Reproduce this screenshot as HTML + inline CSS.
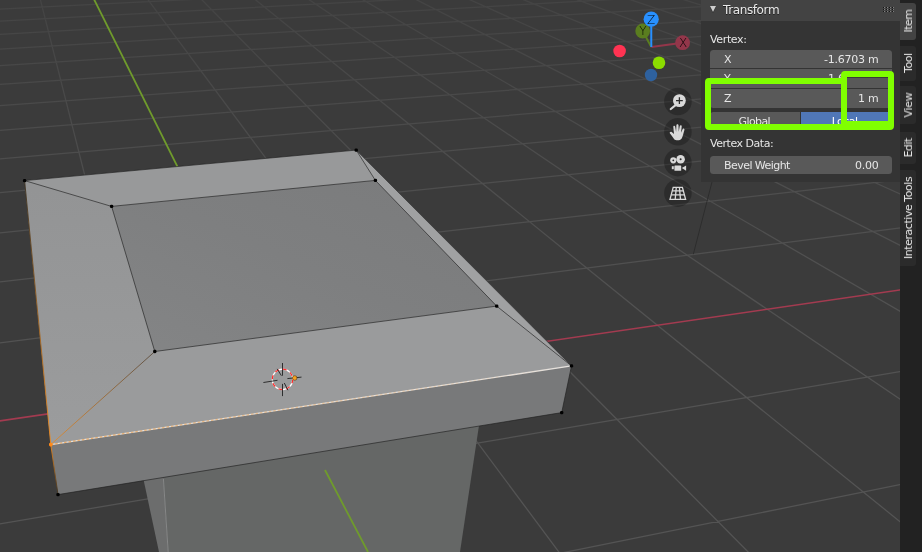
<!DOCTYPE html>
<html><head><meta charset="utf-8"><title>Blender viewport</title>
<style>
html,body{margin:0;padding:0;background:#3b3b3b;}
body{width:922px;height:552px;position:relative;overflow:hidden;font-family:"DejaVu Sans","Liberation Sans",sans-serif;font-size:11px;color:#e6e6e6;}
.vp{position:absolute;left:0;top:0;display:block}
.abs{position:absolute}
.hdr .t,.lbl,.fld span,.tab span,.gl{will-change:transform}
.panel{position:absolute;left:701px;top:0;width:199px;height:182px;background:#343434}
.hdr{position:absolute;left:0;top:0;width:199px;height:21px;background:#434343}
.hdr .t{position:absolute;left:22.1px;top:2.9px;font-size:12px;line-height:15px;color:#e8e8e8;letter-spacing:-0.39px;text-shadow:0 1px 0 rgba(0,0,0,.55)}
.tri{position:absolute;left:8.8px;top:6.1px;width:0;height:0;border-left:3.5px solid transparent;border-right:3.5px solid transparent;border-top:6.2px solid #cdcdcd;filter:drop-shadow(0 1px 0 rgba(0,0,0,.4))}
.lbl{position:absolute;left:9.4px;line-height:14px;white-space:nowrap}
.fld{position:absolute;left:8.8px;width:182.600px;background:#595959;height:18.5px}
.fld span{position:absolute;top:3px;line-height:14px;white-space:nowrap}
.fld .n{left:14.000px} .fld .v{right:14.100px}
.strip{position:absolute;left:900px;top:0;width:22px;height:552px;background:#222222}
.tab{position:absolute;left:0;width:16px;background:#2b2b2b;border-radius:0 3px 3px 0}
.tab.act{background:#434343}
.tab span{position:absolute;left:calc(50% + 1px);top:50%;white-space:nowrap;transform:translate(-50%,-50%) rotate(-90deg);line-height:14px}
.gb{position:absolute;box-sizing:border-box;border:6px solid #80ff00;border-radius:4px}
</style></head><body>
<svg class="vp" width="922" height="552" viewBox="0 0 922 552">
<defs>
<linearGradient id="gInner" x1="0" y1="1" x2="1" y2="0"><stop offset="0" stop-color="#848586"/><stop offset="0.5" stop-color="#7e7f80"/><stop offset="1" stop-color="#7a7b7c"/></linearGradient>
<linearGradient id="gFront" gradientUnits="userSpaceOnUse" x1="50" y1="440" x2="570" y2="370"><stop offset="0" stop-color="#f08a1c"/><stop offset="0.5" stop-color="#f3c9a0"/><stop offset="1" stop-color="#f4f4f4"/></linearGradient>
<linearGradient id="gDiag" gradientUnits="userSpaceOnUse" x1="50.8" y1="444.6" x2="154.8" y2="351.5"><stop offset="0" stop-color="#f08a1c"/><stop offset="1" stop-color="#4a3a2a"/></linearGradient>
<linearGradient id="gLeft" gradientUnits="userSpaceOnUse" x1="50.8" y1="444.6" x2="24.6" y2="180.6"><stop offset="0" stop-color="#f08a1c"/><stop offset="1" stop-color="#3a3020"/></linearGradient>
<linearGradient id="gDown" gradientUnits="userSpaceOnUse" x1="50.8" y1="444.6" x2="58" y2="494.6"><stop offset="0" stop-color="#f08a1c"/><stop offset="1" stop-color="#3a3020"/></linearGradient>
<linearGradient id="gGrid" gradientUnits="userSpaceOnUse" x1="0" y1="0" x2="0" y2="552"><stop offset="0" stop-color="#444444"/><stop offset="0.3" stop-color="#4d4d4d"/><stop offset="0.6" stop-color="#525252"/><stop offset="1" stop-color="#545454"/></linearGradient>
<linearGradient id="gFade" gradientUnits="userSpaceOnUse" x1="50" y1="440" x2="570" y2="370"><stop offset="0" stop-color="#f08a1c" stop-opacity="1"/><stop offset="0.55" stop-color="#f08a1c" stop-opacity="0.5"/><stop offset="1" stop-color="#f08a1c" stop-opacity="0"/></linearGradient>
<linearGradient id="gLS" gradientUnits="userSpaceOnUse" x1="0" y1="190" x2="0" y2="440"><stop offset="0" stop-color="#939495"/><stop offset="1" stop-color="#9b9c9d"/></linearGradient>
</defs>
<rect width="922" height="552" fill="#3b3b3b"/>
<path d="M181.2 557.0L39.2 -5.0M562.6 557.0L144.5 -5.0M753.1 557.0L197.1 -5.0M927.0 543.6L249.6 -5.0M927.0 417.3L302.2 -5.0M927.0 326.9L354.6 -5.0M927.0 259.0L407.1 -5.0M927.0 206.1L459.5 -5.0M927.0 163.8L511.9 -5.0M927.0 129.2L564.3 -5.0M927.0 100.3L616.6 -5.0M927.0 75.9L668.9 -5.0M927.0 54.9L721.2 -5.0M927.0 36.7L773.5 -5.0M927.0 20.8L825.7 -5.0M927.0 6.8L877.8 -5.0M541.6 557.0L927.0 479.2M-5.0 524.7L927.0 367.0M-5.0 343.6L927.0 224.6M-5.0 282.5L927.0 176.6M-5.0 233.4L927.0 137.9M-5.0 193.0L927.0 106.2M-5.0 159.3L927.0 79.6M-5.0 130.7L927.0 57.1M-5.0 106.0L927.0 37.7M-5.0 84.7L927.0 20.9M-5.0 65.9L927.0 6.2M-5.0 49.4L896.5 -5.0M-5.0 34.6L690.9 -5.0M-5.0 21.4L484.8 -5.0M-5.0 9.5L278.3 -5.0M-5.0 -1.3L71.2 -5.0" stroke="url(#gGrid)" stroke-width="1.25" fill="none"/>
<path d="M-5.0 421.6L927.0 286.0" stroke="#a33b50" stroke-width="1.6" fill="none"/>
<path d="M372.0 557.0L91.9 -5.0" stroke="#6f9b2c" stroke-width="1.8" fill="none"/>
<line x1="712.5" y1="180.0" x2="693.3" y2="254.3" stroke="#262626" stroke-width="0.7" />
<polygon points="142.6,475.2 163.0,472.6 168.2,552.0 159.0,552.0" fill="#6c6d6d"/>
<polygon points="163.0,472.6 479.7,420.7 460.0,552.0 168.2,552.0" fill="#656766"/>
<line x1="163.4" y1="478.6" x2="168.2" y2="552.0" stroke="#868787" stroke-width="1.0" />
<line x1="325.0" y1="470.0" x2="368.0" y2="552.0" stroke="#6f9b2c" stroke-width="1.8" />
<polygon points="50.8,444.6 571.5,365.9 561.7,412.6 58.0,494.6" fill="#78797a"/>
<polygon points="24.6,180.6 356.2,150.1 571.5,365.9 50.8,444.6" fill="#98999a"/>
<polygon points="24.6,180.6 111.6,206.4 154.8,351.5 50.8,444.6" fill="url(#gLS)"/>
<polygon points="50.8,444.6 154.8,351.5 496.7,306.1 571.5,365.9" fill="#9a9b9c"/>
<polygon points="356.2,150.1 571.5,365.9 496.7,306.1 375.4,180.4" fill="#a0a1a2"/>
<polygon points="111.6,206.4 375.4,180.4 496.7,306.1 154.8,351.5" fill="url(#gInner)"/>
<line x1="24.6" y1="180.6" x2="356.2" y2="150.1" stroke="#202020" stroke-width="0.65" />
<line x1="356.2" y1="150.1" x2="571.5" y2="365.9" stroke="#202020" stroke-width="0.65" />
<line x1="111.6" y1="206.4" x2="375.4" y2="180.4" stroke="#202020" stroke-width="0.65" />
<line x1="375.4" y1="180.4" x2="496.7" y2="306.1" stroke="#202020" stroke-width="0.65" />
<line x1="496.7" y1="306.1" x2="154.8" y2="351.5" stroke="#202020" stroke-width="0.65" />
<line x1="154.8" y1="351.5" x2="111.6" y2="206.4" stroke="#202020" stroke-width="0.65" />
<line x1="24.6" y1="180.6" x2="111.6" y2="206.4" stroke="#202020" stroke-width="0.65" />
<line x1="356.2" y1="150.1" x2="375.4" y2="180.4" stroke="#202020" stroke-width="0.65" />
<line x1="571.5" y1="365.9" x2="496.7" y2="306.1" stroke="#202020" stroke-width="0.65" />
<line x1="571.5" y1="365.9" x2="561.7" y2="412.6" stroke="#202020" stroke-width="0.65" />
<line x1="561.7" y1="412.6" x2="58.0" y2="494.6" stroke="#202020" stroke-width="0.65" />
<line x1="50.8" y1="444.6" x2="154.8" y2="351.5" stroke="url(#gDiag)" stroke-width="0.75" />
<line x1="50.8" y1="444.6" x2="24.6" y2="180.6" stroke="url(#gLeft)" stroke-width="0.9" />
<line x1="50.8" y1="444.6" x2="58.0" y2="494.6" stroke="url(#gDown)" stroke-width="0.9" />
<line x1="50.8" y1="444.6" x2="571.5" y2="365.9" stroke="#e6e2de" stroke-width="1.25" />
<line x1="50.8" y1="444.6" x2="571.5" y2="365.9" stroke="url(#gFade)" stroke-width="1.25" stroke-dasharray="2.500 2" stroke-opacity="0.6"/>
<rect x="22.9" y="178.9" width="3.4" height="3.4" fill="#000" rx="1.4"/>
<rect x="354.5" y="148.4" width="3.4" height="3.4" fill="#000" rx="1.4"/>
<rect x="569.8" y="364.2" width="3.4" height="3.4" fill="#000" rx="1.4"/>
<rect x="109.9" y="204.7" width="3.4" height="3.4" fill="#000" rx="1.4"/>
<rect x="373.7" y="178.7" width="3.4" height="3.4" fill="#000" rx="1.4"/>
<rect x="495.0" y="304.4" width="3.4" height="3.4" fill="#000" rx="1.4"/>
<rect x="153.1" y="349.8" width="3.4" height="3.4" fill="#000" rx="1.4"/>
<rect x="56.3" y="492.9" width="3.4" height="3.4" fill="#000" rx="1.4"/>
<rect x="560.0" y="410.9" width="3.4" height="3.4" fill="#000" rx="1.4"/>
<rect x="49.0" y="442.8" width="3.6" height="3.6" fill="#ff8a1a" rx="1.4"/>
<circle cx="282.5" cy="379.4" r="10.2" fill="none" stroke="#fff" stroke-width="1.2"/>
<circle cx="282.5" cy="379.4" r="10.2" fill="none" stroke="#ff2a2a" stroke-width="1.2" stroke-dasharray="4 4"/>
<line x1="282.5" y1="363.0" x2="282.5" y2="375.7" stroke="#111" stroke-width="0.8" />
<line x1="282.5" y1="383.9" x2="282.5" y2="396.1" stroke="#111" stroke-width="0.8" />
<line x1="263.4" y1="382.5" x2="277.5" y2="380.3" stroke="#111" stroke-width="0.8" />
<line x1="287.4" y1="378.6" x2="301.5" y2="377.1" stroke="#111" stroke-width="0.8" />
<line x1="277.2" y1="368.9" x2="281.4" y2="375.7" stroke="#111" stroke-width="0.8" />
<line x1="284.3" y1="383.0" x2="287.9" y2="390.2" stroke="#111" stroke-width="0.8" />
<circle cx="294.7" cy="378" r="2.300" fill="#f5a020" stroke="#5a3a10" stroke-width="0.6"/>
<g font-family="'DejaVu Sans','Liberation Sans',sans-serif" font-size="11" text-anchor="middle">
<line x1="651.3" y1="46.9" x2="682.6" y2="42.7" stroke="#93364a" stroke-width="2"/>
<line x1="651.3" y1="46.9" x2="642.7" y2="31" stroke="#5a7d1f" stroke-width="2"/>
<circle cx="642.7" cy="31" r="7.4" fill="#5a7d1f"/>
<line x1="651.3" y1="46.9" x2="651.2" y2="19.2" stroke="#2890ff" stroke-width="2"/>
<circle cx="651.2" cy="19.2" r="7.6" fill="#2890ff"/>
<circle cx="682.6" cy="42.7" r="7.4" fill="#93364a"/>
<circle cx="619.6" cy="51" r="6.3" fill="#ff3352"/>
<circle cx="651" cy="75" r="6.2" fill="#2e619e"/>
<circle cx="659" cy="62.7" r="6.3" fill="#8bdc00"/>
</g>
<circle cx="677.9" cy="101.5" r="13.8" fill="#000" fill-opacity="0.25"/>
<circle cx="677.9" cy="131.8" r="13.8" fill="#000" fill-opacity="0.25"/>
<circle cx="677.9" cy="162.6" r="13.8" fill="#000" fill-opacity="0.25"/>
<circle cx="677.9" cy="193.1" r="13.8" fill="#000" fill-opacity="0.25"/>
<circle cx="679.4" cy="100.6" r="6.4" fill="#d9d9d9"/><line x1="675.6" y1="105.2" x2="670.8" y2="109" stroke="#d9d9d9" stroke-width="2.2" stroke-linecap="round"/><path d="M676 100.6h6.8M679.4 97.2v6.8" stroke="#2b2b2b" stroke-width="1.3"/>
<path d="M674.2 139.2c-1.2-1.4-3-4.2-4.2-5.6c-.9-1.1.5-2.4 1.7-1.6l2.3 1.9l-.7-7c-.1-1.4 1.7-1.6 1.9-.2l.9 5.2l.3-6.6c.1-1.4 2-1.4 2.100 0l.2 6.500l1.100-5.800c.300-1.300 2.100-1 1.900.400l-.7 6.400l1.600-3.600c.6-1.200 2.200-.5 1.800.8c-.8 2.600-1.400 6-2.700 8.400c-1.300 2.100-5.800 2.600-7.500.8z" fill="#d9d9d9"/>
<g fill="#d9d9d9"><circle cx="673.3" cy="160.3" r="3.1"/><circle cx="680.6" cy="159.3" r="4.3"/><rect x="674.4" y="165.400" width="6.800" height="5.400" rx="0.6"/><path d="M681.800 168.100l4.300-2.700v5.400z"/><rect x="671.8" y="166.2" width="2" height="3"/></g><circle cx="673.3" cy="160.3" r="0.9" fill="#2b2b2b"/><circle cx="680.6" cy="159.3" r="1" fill="#2b2b2b"/>
<g stroke="#d9d9d9" stroke-width="1.300" fill="none"><path d="M673.2 187.400h9.200l3.200 12h-15.600z"/><path d="M676.300 187.400l-1.100 12M679.400 187.400l1.100 12M672.300 190.800h11M671.300 194.800h13"/></g>
</svg>
<div class="gl abs" style="left:635.700px;top:24px;width:14px;text-align:center;line-height:14px;color:#000;font-size:12px;font-family:'DejaVu Sans Light','DejaVu Sans','Liberation Sans',sans-serif;font-weight:200">Y</div>
<div class="gl abs" style="left:644.200px;top:12.700px;width:14px;text-align:center;line-height:14px;color:#000;font-size:12px;font-family:'DejaVu Sans Light','DejaVu Sans','Liberation Sans',sans-serif;font-weight:200">Z</div>
<div class="gl abs" style="left:675.600px;top:35.700px;width:14px;text-align:center;line-height:14px;color:#000;font-size:12px;font-family:'DejaVu Sans Light','DejaVu Sans','Liberation Sans',sans-serif;font-weight:200">X</div>
<div class="panel">
 <div class="hdr"><div class="tri"></div><div class="t">Transform</div>
 <svg class="abs" style="left:182px;top:7px" width="12" height="6" shape-rendering="crispEdges"><rect x="0" y="0" width="1" height="1" fill="#161616"/><rect x="1" y="0" width="1" height="1" fill="#808080"/><rect x="0" y="2" width="1" height="1" fill="#161616"/><rect x="1" y="2" width="1" height="1" fill="#808080"/><rect x="0" y="4" width="1" height="1" fill="#161616"/><rect x="1" y="4" width="1" height="1" fill="#808080"/><rect x="3" y="0" width="1" height="1" fill="#161616"/><rect x="4" y="0" width="1" height="1" fill="#808080"/><rect x="3" y="2" width="1" height="1" fill="#161616"/><rect x="4" y="2" width="1" height="1" fill="#808080"/><rect x="3" y="4" width="1" height="1" fill="#161616"/><rect x="4" y="4" width="1" height="1" fill="#808080"/><rect x="6" y="0" width="1" height="1" fill="#161616"/><rect x="7" y="0" width="1" height="1" fill="#808080"/><rect x="6" y="2" width="1" height="1" fill="#161616"/><rect x="7" y="2" width="1" height="1" fill="#808080"/><rect x="6" y="4" width="1" height="1" fill="#161616"/><rect x="7" y="4" width="1" height="1" fill="#808080"/><rect x="9" y="0" width="1" height="1" fill="#161616"/><rect x="10" y="0" width="1" height="1" fill="#808080"/><rect x="9" y="2" width="1" height="1" fill="#161616"/><rect x="10" y="2" width="1" height="1" fill="#808080"/><rect x="9" y="4" width="1" height="1" fill="#161616"/><rect x="10" y="4" width="1" height="1" fill="#808080"/></svg>
 </div>
 <div class="lbl" style="top:32.8px;left:8.8px;letter-spacing:-0.35px">Vertex:</div>
 <div class="fld" style="top:49.500px;border-radius:3.500px 3.500px 0 0"><span class="n">X</span><span class="v" style="letter-spacing:-0.26px">-1.6703 m</span></div>
 <div class="fld" style="top:69px;border-radius:0"><span class="n">Y</span><span class="v" style="letter-spacing:-0.26px">1.6703 m</span></div>
 <div class="fld" style="top:89px;height:19px;border-radius:0 0 3.500px 3.500px"><span class="n">Z</span><span class="v" style="letter-spacing:-0.3px">1 m</span></div>
 <div class="fld" style="top:112.300px;height:15px;width:90.600px;border-radius:3.500px 0 0 0"><span style="left:0;width:100%;text-align:center;letter-spacing:-0.62px;margin-left:-1.2px">Global</span></div>
 <div class="fld" style="top:112.300px;height:15px;left:100.100px;width:91.3px;background:#5077b7;border-radius:0 3.500px 0 0"><span style="left:0;width:100%;text-align:center;color:#fff;letter-spacing:-0.5px;margin-left:-2px">Local</span></div>
 <div class="lbl" style="top:136.500px;letter-spacing:-0.47px">Vertex Data:</div>
 <div class="fld" style="top:156px;height:18px;border-radius:3.500px"><span class="n" style="letter-spacing:-0.55px">Bevel Weight</span><span class="v" style="letter-spacing:-0.22px">0.00</span></div>
</div>
<div class="strip">
 <div class="tab act" style="top:3px;height:36.500px"><span style="letter-spacing:-0.5px">Item</span></div>
 <div class="tab" style="top:46px;height:34.500px"><span style="letter-spacing:-0.4px">Tool</span></div>
 <div class="tab" style="top:86px;height:38px"><span style="letter-spacing:-0.25px">View</span></div>
 <div class="tab" style="top:131.500px;height:32px"><span style="letter-spacing:-0.62px;margin-top:0px">Edit</span></div>
 <div class="tab" style="top:170px;height:95.500px"><span style="letter-spacing:-0.45px">Interactive Tools</span></div>
</div>
<div class="gb" style="left:705.200px;top:78px;width:189px;height:51.700px"></div>
<div class="abs" style="left:847.300px;top:77px;width:40.600px;height:7.200px;background:#595959;border-top:1px solid #3a3a3a;box-sizing:border-box"></div>
<div class="gb" style="left:841.300px;top:70.800px;width:52.900px;height:56px"></div>
</body></html>
